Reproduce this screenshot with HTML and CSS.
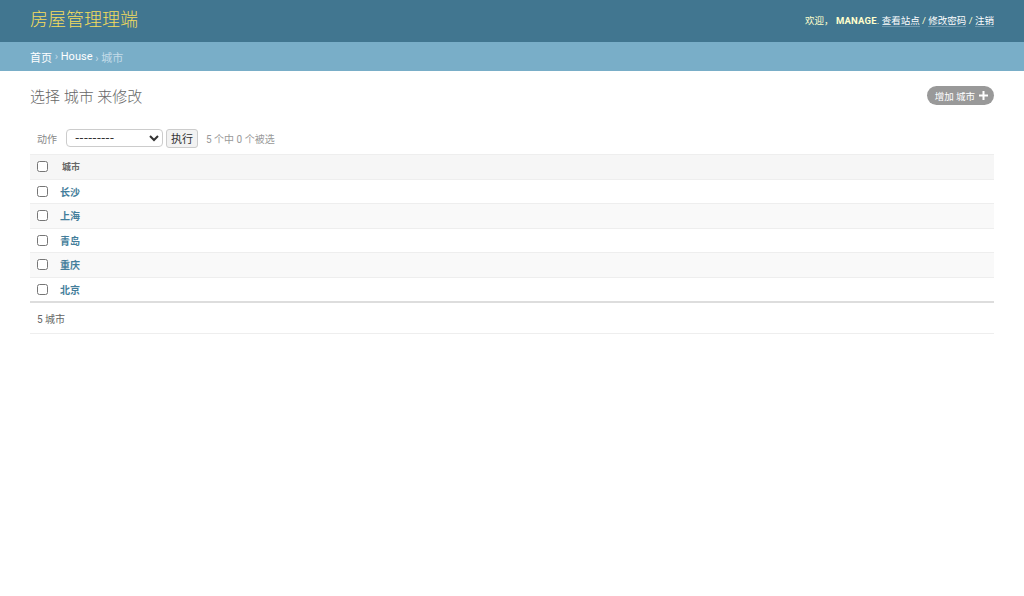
FILE: index.html
```html
<!DOCTYPE html>
<html lang="zh-hans">
<head>
<meta charset="utf-8">
<title>选择 城市 来修改</title>
<link rel="stylesheet" href="styles.css">
</head>
<body>
<div class="header">
  <h1 class="branding">房屋管理理端</h1>
  <div class="user-tools">欢迎， <strong>MANAGE</strong>. <a href="#">查看站点</a> / <a href="#">修改密码</a> / <a href="#">注销</a></div>
</div>
<div class="breadcrumbs"><a href="#">首页</a> › <a href="#">House</a> › 城市</div>
<div class="content">
  <div class="title-row">
    <h1 class="page-title">选择 城市 来修改</h1>
    <a class="addlink" href="#">增加 城市 <svg width="9" height="9" viewBox="0 0 9 9"><path d="M3.5 0h2v3.5H9v2H5.5V9h-2V5.5H0v-2h3.5z" fill="#fff"/></svg></a>
  </div>
  <div class="actions">
    <label class="action-label">动作</label>
    <select class="action-select"><option>---------</option></select>
    <button class="go">执行</button>
    <span class="counter">5 个中 0 个被选</span>
  </div>
  <table class="result-list">
    <thead>
      <tr><th class="cb"><input type="checkbox"></th><th class="name">城市</th></tr>
    </thead>
    <tbody>
      <tr><td class="cb"><input type="checkbox"></td><td><a href="#">长沙</a></td></tr>
      <tr class="alt"><td class="cb"><input type="checkbox"></td><td><a href="#">上海</a></td></tr>
      <tr><td class="cb"><input type="checkbox"></td><td><a href="#">青岛</a></td></tr>
      <tr class="alt"><td class="cb"><input type="checkbox"></td><td><a href="#">重庆</a></td></tr>
      <tr><td class="cb"><input type="checkbox"></td><td><a href="#">北京</a></td></tr>
    </tbody>
  </table>
  <p class="paginator">5 城市</p>
</div>
</body>
</html>
```
FILE: styles.css
```css
html, body {
  margin: 0;
  padding: 0;
}
body {
  font-family: Roboto, "Noto Sans CJK SC", "DejaVu Sans", sans-serif;
  font-size: 13px;
  color: #333;
  background: #fff;
}
a { text-decoration: none; }

.header {
  height: 42px;
  box-sizing: border-box;
  background: #417690;
  padding: 0 30px;
  display: flex;
  align-items: center;
  justify-content: space-between;
}
.branding {
  margin: 0;
  font-size: 18px;
  font-weight: 300;
  color: #f5dd5d;
  line-height: 1;
  position: relative;
  top: -1px;
}
.user-tools {
  font-size: 9.5px;
  color: #ffc;
  position: relative;
  top: -1px;
}
.user-tools strong {
  font-weight: 700;
  letter-spacing: 0.2px;
}
.user-tools a {
  color: #fff;
  border-bottom: 1px solid rgba(255,255,255,0.25);
}

.breadcrumbs {
  height: 29px;
  box-sizing: border-box;
  background: #79aec8;
  padding: 0 30px;
  display: flex;
  align-items: center;
  font-size: 11px;
  color: #c4dce8;
  white-space: pre;
}
.breadcrumbs a { color: #fff; }

.content {
  padding: 14px 30px 0;
}
.title-row {
  display: flex;
  align-items: center;
  justify-content: space-between;
  height: 21px;
}
.page-title {
  margin: 0;
  font-size: 15px;
  font-weight: 300;
  color: #666;
}
.addlink {
  display: flex;
  align-items: center;
  gap: 4px;
  height: 19px;
  box-sizing: border-box;
  padding: 0 6px 0 8px;
  border-radius: 10px;
  background: #999;
  color: #fff;
  font-size: 9.5px;
}

.actions {
  margin-top: 20px;
  height: 24px;
  display: flex;
  align-items: center;
  padding: 0 7px;
  font-size: 10px;
  color: #999;
}
.action-label { color: #888; margin-right: 9px; }
.action-select {
  width: 97px;
  height: 18px;
  box-sizing: border-box;
  font-size: 12px;
  font-family: "DejaVu Sans", sans-serif;
  border: 1px solid #ccc;
  border-radius: 4px;
  background: #fff;
  color: #333;
  padding: 0 4px;
}
.go {
  margin-left: 3px;
  height: 19px;
  width: 32px;
  box-sizing: border-box;
  padding: 0;
  font-size: 11px;
  font-family: inherit;
  border: 1px solid #ccc;
  border-radius: 3px;
  background: #f2f2f2;
  color: #333;
}
.counter { margin-left: 8px; color: #999; }

.result-list {
  margin-top: 4px;
  width: 100%;
  border-collapse: collapse;
}
.result-list th, .result-list td {
  height: 23.5px;
  padding: 0;
  text-align: left;
  vertical-align: middle;
  border-bottom: 1px solid #eee;
}
.result-list thead th {
  background: #f6f6f6;
  border-top: 1px solid #eee;
  font-size: 9px;
  font-weight: 600;
  color: #666;
}
.result-list th.name { padding-left: 2px; }
.result-list .cb {
  width: 23px;
  padding-left: 7px;
}
.result-list input[type=checkbox] {
  margin: 0;
  width: 11px;
  height: 11px;
  display: block;
}
.result-list td {
  font-size: 10px;
  font-weight: 600;
}
.result-list td a { color: #447e9b; }
.result-list tr.alt td { background: #f9f9f9; }
.result-list tbody tr:last-child td { border-bottom: 2px solid #ddd; }

.paginator {
  margin: 0;
  height: 31px;
  box-sizing: border-box;
  display: flex;
  align-items: center;
  padding: 0 7px;
  font-size: 10px;
  color: #666;
  border-bottom: 1px solid #eee;
}
```
